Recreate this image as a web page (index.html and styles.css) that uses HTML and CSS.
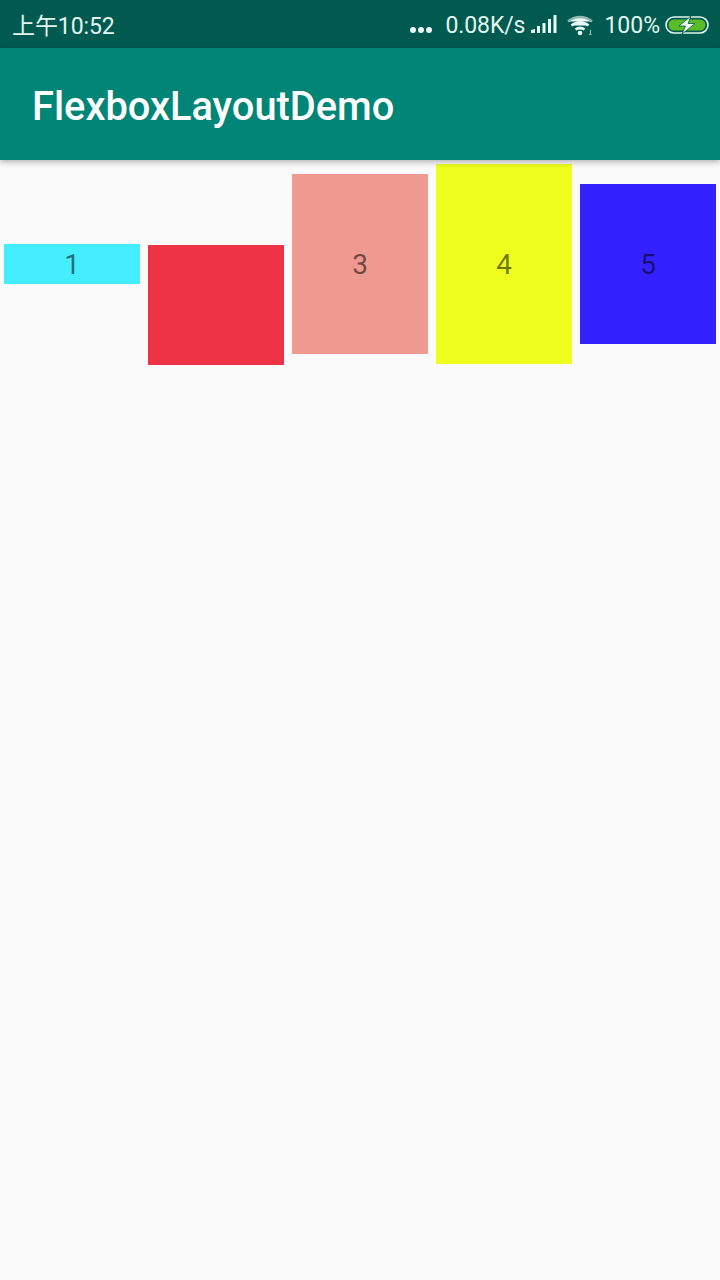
FILE: index.html
```html
<!DOCTYPE html>
<html lang="en">
<head>
  <meta charset="UTF-8" />
  <title>FlexboxLayoutDemo</title>
  <meta name="viewport" content="width=device-width,initial-scale=1" />
  <link rel="stylesheet" href="styles.css">
</head>
<body>

<div id="statusbar">
  <span class="time">上午10:52</span>
  <div class="status-right">
    <svg class="dots" width="22" height="6" viewBox="0 0 22 6"><circle cx="3" cy="3" r="3"/><circle cx="11" cy="3" r="3"/><circle cx="19" cy="3" r="3"/></svg>
    <span class="speed">0.08K/s</span>
    <svg class="signal" width="26" height="18" viewBox="0 0 26 18">
      <path d="M0 18v-3l4-1v4z"/>
      <rect x="6" y="11" width="3" height="7"/>
      <rect x="11.500" y="8" width="3" height="10"/>
      <rect x="17" y="4" width="3" height="14"/>
      <rect x="22.500" y="0" width="3" height="18"/>
    </svg>
    <svg class="wifi" width="26" height="21" viewBox="0 0 26 21" fill="none">
      <path d="M1 6.500C8 .5 18 .5 25 6.500" stroke="#8fb8b0" stroke-width="2.400"/>
      <path d="M4.500 10.500C9.500 6.200 16.500 6.200 21.500 10.500" stroke="#eafaf6" stroke-width="2.400"/>
      <path d="M8.500 14.500C11.200 12.300 14.800 12.300 17.500 14.500" stroke="#eafaf6" stroke-width="2.400"/>
      <circle cx="13" cy="18" r="2.300" fill="#eafaf6"/>
      <path d="M23.500 15v4.500M21.800 19.500h3" stroke="#8fb8b0" stroke-width="1.200"/>
    </svg>
    <span class="battery-text">100%</span>
    <svg class="battery" width="44" height="18" viewBox="0 0 44 18">
      <rect x="1" y="1" width="42" height="16" rx="8" fill="none" stroke="#e4f5ec" stroke-width="1.600"/>
      <rect x="3.500" y="3.500" width="37" height="11" rx="5.500" fill="#5dbb2a"/>
      <path d="M26 0L14 10h6.500L17 18 30 7.500h-7z" fill="#f2fbf2" stroke="#005a50" stroke-width="0.800"/>
    </svg>
  </div>
</div>

<header id="appbar">FlexboxLayoutDemo</header>

<div id="main">
  <!-- items line up on the text baseline -->
  <div class="box box-1"><span>1</span></div>
  <div class="box box-2"><span>&nbsp;</span></div>
  <div class="box box-3"><span>3</span></div>
  <div class="box box-4"><span>4</span></div>
  <div class="box box-5"><span>5</span></div>
</div>

</body>
</html>
```

FILE: styles.css
```css
html, body { height:100%; }
body {
  margin:0; background:#fafafa;
  font-family: Roboto, "Noto Sans CJK SC", sans-serif;
  overflow:hidden;
}

/* STATUS BAR */
#statusbar {
  height:48px; box-sizing:border-box;
  background:#005a50; color:#e4f5f0;
  display:flex; align-items:center; justify-content:space-between;
  padding:0 11px 0 12px;
  font-size:23px;
}
.time { letter-spacing:-0.1px; }
.status-right { display:flex; align-items:center; padding-top:2px; }
.status-right svg { fill:#eafaf6; flex-shrink:0; }
.dots { margin-top:10px; margin-right:13px; }
.speed { margin-right:6px; letter-spacing:-0.1px; }
.signal { margin-top:-3px; margin-right:10px; }
.wifi { margin-top:0; margin-right:11px; }
.battery-text { margin-right:5px; }
.battery { margin-top:0; }

/* APP BAR */
#appbar {
  height:112px; box-sizing:border-box;
  background:#008577; color:#fff;
  display:flex; align-items:center;
  padding:4px 0 0 32px;
  font-size:39.800px; font-weight:500;
  box-shadow:0 2px 6px rgba(0,0,0,.3);
  position:relative;
}

/* FLEX ROW */
#main {
  display:flex; align-items:baseline; gap:8px;
  padding:4px;
}
.box {
  width:136px; flex-shrink:0; box-sizing:border-box;
  display:flex; align-items:center; justify-content:center;
  padding-top:2px;
  font-size:28px; line-height:40px;
  color:rgba(0,0,0,.54);
}
.box-1 { height:40px; background:#44eeff; }
.box-2 { height:120px; padding-top:0; background:#ef3346; align-items:flex-start; }
.box-3 { height:180px; background:#ef9a90; }
.box-4 { height:200px; background:#eeff1e; }
.box-5 { height:160px; background:#3322ff; }
```
